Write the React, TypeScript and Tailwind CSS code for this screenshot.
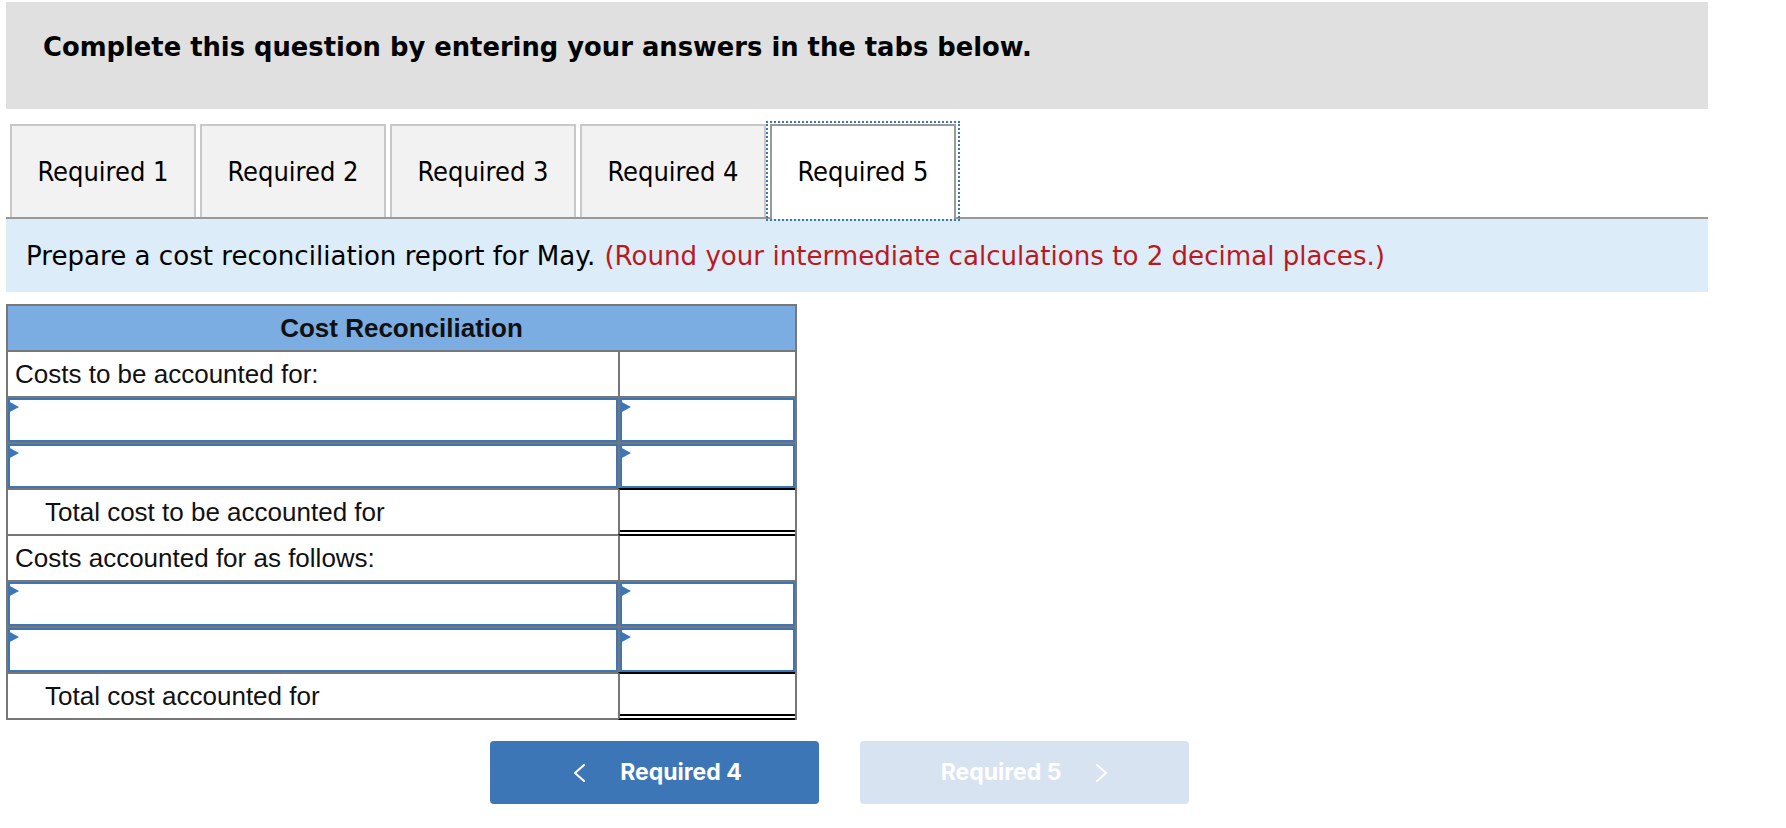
import React from "react";

const TAHOMA = { fontFamily: '"DejaVu Sans Condensed", "DejaVu Sans", sans-serif' };
const VERDANA = { fontFamily: '"DejaVu Sans", Verdana, sans-serif' };

function Tri() {
  return (
    <svg className="absolute -left-[2px] top-[1px]" width="11" height="12" viewBox="0 0 11 12">
      <polygon points="0,0 11,6 0,12" fill="#3d76b7" />
    </svg>
  );
}

function InputBox() {
  return (
    <div className="relative h-full w-full border-2 border-[#3d76b7] bg-white">
      <Tri />
    </div>
  );
}

type RowProps = {
  label?: string;
  indent?: boolean;
  input?: boolean;
  total?: boolean;
  blackTop?: boolean;
  last?: boolean;
};

function Row({ label, indent, input, total, blackTop, last }: RowProps) {
  const h = last ? "h-[48px]" : "h-[46px]";
  return (
    <div className="flex">
      <div
        className={`${h} w-[610px] border-t-2 border-t-[#777] ${last ? "border-b-2 border-b-[#777]" : ""} flex items-center`}
      >
        {input ? (
          <InputBox />
        ) : (
          <span className={`text-[26px] text-[#111] ${indent ? "pl-[37px]" : "pl-[7px]"}`}>{label}</span>
        )}
      </div>
      <div
        className={`${h} flex-1 border-t-2 border-l-2 border-l-[#777] ${blackTop || total ? "border-t-black" : "border-t-[#777]"} ${last ? "border-b-2 border-b-black" : ""}`}
      >
        {input ? <InputBox /> : total ? <div className="h-[42px] border-b-2 border-b-black" /> : null}
      </div>
    </div>
  );
}

function Chevron({ dir }: { dir: "left" | "right" }) {
  return (
    <svg width="13" height="18" viewBox="0 0 13 18" fill="none">
      {dir === "left" ? (
        <polyline points="11,1 2,9 11,17" stroke="white" strokeWidth="2" strokeLinecap="round" strokeLinejoin="round" />
      ) : (
        <polyline points="2,1 11,9 2,17" stroke="white" strokeWidth="2" strokeLinecap="round" strokeLinejoin="round" />
      )}
    </svg>
  );
}

export default function App() {
  const tabs = ["Required 1", "Required 2", "Required 3", "Required 4"];
  return (
    <div className="min-h-[828px] bg-white pl-[6px] pt-[2px]">
      <div className="w-[1702px]">
        <div className="h-[107px] bg-[#e0e0e0] pl-[37px] pt-[29px]">
          <h1 className="text-[25.8px] font-bold leading-[32px] text-black" style={VERDANA}>
            Complete this question by entering your answers in the tabs below.
          </h1>
        </div>

        <div className="mt-[15px] flex items-end border-b-2 border-[#999] pl-[4px]" style={TAHOMA}>
          {tabs.map((t) => (
            <div
              key={t}
              className="mr-[4px] flex h-[93px] w-[186px] items-center justify-center border-2 border-b-0 border-[#c8c8c8] bg-[#f2f2f2] pt-[2px] text-[27px] text-black"
            >
              {t}
            </div>
          ))}
          <div className="relative z-10 -mb-[2px] flex h-[95px] w-[186px] items-center justify-center border-2 border-b-0 border-[#999] bg-white text-[27px] text-black">
            Required 5
            <div className="pointer-events-none absolute -bottom-[2px] -left-[6px] -right-[6px] -top-[5px] border-2 border-dotted border-[#3d76b7]" />
          </div>
        </div>

        <div className="flex h-[73px] items-center bg-[#dcecf8] pl-[20px] pt-[3px] text-[26.1px]" style={VERDANA}>
          <span className="text-black">Prepare a cost reconciliation report for May.</span>
          <span className="ml-[9px] text-[#ba1a1f]">(Round your intermediate calculations to 2 decimal places.)</span>
        </div>

        <div
          className="mt-[12px] w-[791px] border-2 border-b-0 border-[#777]"
          style={{ fontFamily: '"Liberation Sans", Arial, sans-serif' }}
        >
          <div className="flex h-[44px] items-center justify-center bg-[#7badE2] text-[26px] font-bold text-[#111]">
            Cost Reconciliation
          </div>
          <Row label="Costs to be accounted for:" />
          <Row input />
          <Row input />
          <Row label="Total cost to be accounted for" indent total />
          <Row label="Costs accounted for as follows:" blackTop />
          <Row input />
          <Row input />
          <Row label="Total cost accounted for" indent total last />
        </div>

        <div className="ml-[484px] mt-[21px] flex gap-[41px]" style={{ fontFamily: "Inter, sans-serif" }}>
          <button className="flex h-[63px] w-[329px] items-center justify-center gap-[34px] rounded-[4px] bg-[#3d76b7] pl-[6px] text-[23px] font-bold text-white">
            <Chevron dir="left" />
            <span>Required 4</span>
          </button>
          <button className="flex h-[63px] w-[329px] items-center justify-center gap-[34px] rounded-[4px] bg-[#d7e3f1] text-[23px] font-bold text-white">
            <span>Required 5</span>
            <Chevron dir="right" />
          </button>
        </div>
      </div>
    </div>
  );
}
